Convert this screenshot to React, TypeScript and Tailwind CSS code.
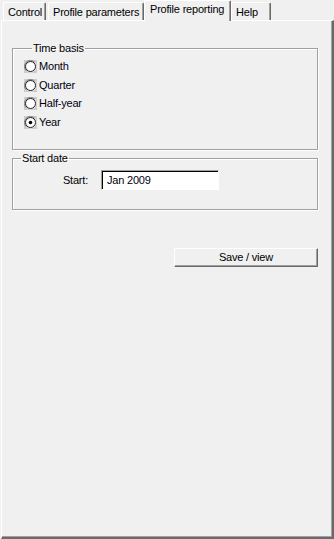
import React from "react";

const font = { fontFamily: '"Liberation Sans", Arial, sans-serif' };

function Radio({ checked }: { checked?: boolean }) {
  return (
    <svg width="13" height="13" viewBox="0 0 13 13" className="shrink-0">
      <rect x="0" y="0" width="13" height="13" fill="#cdcdcd" />
      <circle cx="6.5" cy="6.5" r="6" fill="#e8e8e8" />
      <path d="M2.2 10.8 A6 6 0 0 1 10.8 2.2" fill="none" stroke="#808080" strokeWidth="1" />
      <circle cx="6.5" cy="6.5" r="5" fill="#ffffff" stroke="#202020" strokeWidth="1" />
      {checked && <circle cx="6.5" cy="6.5" r="1.8" fill="#000" />}
    </svg>
  );
}

function Tab({ label, selected, w, ml }: { label: string; selected?: boolean; w: string; ml?: string }) {
  if (selected) {
    return (
      <div
        className={`relative z-10 -mb-px h-[21px] ${w} ${ml ?? ""} border-t border-l border-white border-r border-r-[#696969] shadow-[inset_-1px_0_0_#a0a0a0] bg-[#f0f0f0] rounded-t-[2px] pl-[5px] pt-[2px] text-[11px] leading-[13px] text-black`}
      >
        {label}
      </div>
    );
  }
  return (
    <div
      className={`h-[18px] ${w} ${ml ?? ""} border-t border-l border-white border-r border-r-[#696969] shadow-[inset_-1px_0_0_#a0a0a0] bg-[#f0f0f0] rounded-t-[2px] pl-[4px] pt-[3px] text-[11px] leading-[13px] text-black`}
    >
      {label}
    </div>
  );
}

function RadioRow({ label, checked }: { label: string; checked?: boolean }) {
  return (
    <div className="flex h-[19px] items-center gap-[2px]">
      <Radio checked={checked} />
      <span className="text-[11px] leading-[13px] text-[#000010]">{label}</span>
    </div>
  );
}

export default function App() {
  return (
    <div className="w-[334px] h-[539px] bg-[#f0f0f0] flex flex-col pl-px tracking-[-0.2px]" style={font}>
      <div className="relative z-10 flex h-[20px] items-end pl-[2px]">
        <Tab label="Control" w="w-[43px]" />
        <Tab label="Profile parameters" w="w-[96px]" ml="ml-[2px]" />
        <Tab label="Profile reporting" selected w="w-[87px]" />
        <Tab label="Help" w="w-[40px]" />
      </div>
      <div className="flex-1 flex flex-col border-t border-l border-white border-r-2 border-b-2 border-r-[#696969] border-b-[#696969] shadow-[inset_-1px_-1px_0_#a0a0a0] pl-[10px] pr-[14px] pt-[21px]">
        <fieldset className="border border-[#a0a0a0] shadow-[1px_1px_0_#fff,inset_1px_1px_0_#fff] pl-[11px] pt-[2px] pb-[17px]">
          <legend className="ml-[8px] px-px text-[11px] leading-[13px] text-black">Time basis</legend>
          <div className="h-[19px] flex items-center gap-[2px]">
            <Radio />
            <span className="text-[11px] leading-[13px] text-[#000010]">Month</span>
          </div>
          <div className="h-[18px] flex items-center gap-[2px]">
            <Radio />
            <span className="text-[11px] leading-[13px] text-[#000010]">Quarter</span>
          </div>
          <RadioRow label="Half-year" />
          <RadioRow label="Year" checked />
        </fieldset>
        <fieldset className="mt-[2px] border border-[#a0a0a0] shadow-[1px_1px_0_#fff,inset_1px_1px_0_#fff] pt-[5px] pb-[19px]">
          <legend className="ml-[8px] px-px text-[11px] leading-[13px] text-black">Start date</legend>
          <div className="flex items-center">
            <div className="w-[75px] text-right text-[11px] leading-[13px] text-black">Start:</div>
            <div className="ml-[13px] w-[118px] h-[20px] bg-white border-t border-l border-[#a0a0a0] border-r border-b border-r-white border-b-white shadow-[inset_1px_1px_0_#000] pl-[5px] flex items-center text-[11px] leading-[13px] text-[#000010]">
              Jan 2009
            </div>
          </div>
        </fieldset>
        <button className="self-end mt-[38px] w-[144px] h-[19px] border-t border-l border-white border-r border-b border-r-[#696969] border-b-[#696969] shadow-[inset_-1px_-1px_0_#a0a0a0] bg-[#f0f0f0] text-[11px] leading-[13px] text-black flex items-center justify-center">
          Save / view
        </button>
      </div>
    </div>
  );
}
